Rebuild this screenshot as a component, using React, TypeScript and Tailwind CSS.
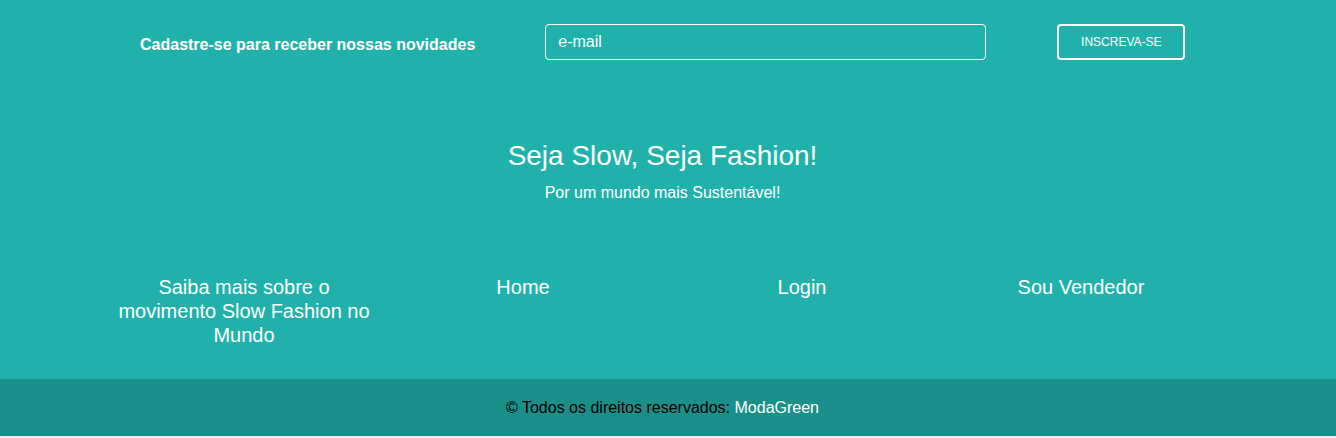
export default function App() {
  const links = [
    "Saiba mais sobre o movimento Slow Fashion no Mundo",
    "Home",
    "Login",
    "Sou Vendedor",
  ];

  return (
    <div className="min-h-screen bg-[#efefef] font-['Liberation_Sans',Arial,sans-serif]">
      <footer className="bg-[#20b2aa] text-white">
        <div className="mr-[11px]">
          <div className="flex items-center pt-6 pl-[140px] gap-[70px]">
            <h3 className="mt-1.5 text-base font-bold leading-5">
              Cadastre-se para receber nossas novidades
            </h3>
            <input
              type="email"
              placeholder="e-mail"
              className="w-[441px] h-9 rounded border border-white bg-transparent px-3 text-base text-white placeholder:text-white outline-none"
            />
            <button className="ml-px w-32 h-9 rounded border-2 border-white text-xs text-white">
              INSCREVA-SE
            </button>
          </div>

          <div className="mt-[80px] text-center">
            <h2 className="text-[28px] leading-8">Seja Slow, Seja Fashion!</h2>
            <p className="mt-[9px] text-base leading-6">
              Por um mundo mais Sustentável!
            </p>
          </div>

          <ul className="mt-[70px] flex justify-center pb-8">
            {links.map((l) => (
              <li key={l} className="w-[279px] px-2 text-center text-xl leading-6">
                <a href="#">{l}</a>
              </li>
            ))}
          </ul>
        </div>

        <div className="bg-[#1b8f89] h-[57px] flex items-center">
          <p className="mr-[11px] flex-1 text-center text-base text-black">
            © Todos os direitos reservados: <span className="text-white">ModaGreen</span>
          </p>
        </div>
      </footer>
    </div>
  );
}
